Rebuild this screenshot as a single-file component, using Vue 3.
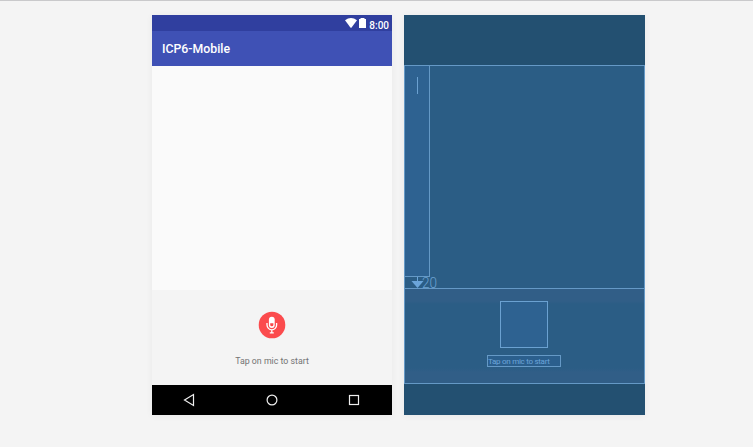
<script setup>
const title = 'ICP6-Mobile'
const hint = 'Tap on mic to start'
</script>

<template>
  <main class="editor">
    <section class="device preview">
      <div class="status">
        <svg class="wifi" width="12" height="10" viewBox="0 0 12 10"><path d="M0 2.2Q6-2 12 2.2L6.6 9.4Q6 10 5.4 9.4Z" fill="#fff" /></svg>
        <svg class="battery" width="7" height="10" viewBox="0 0 7 10"><path d="M0 1H1.5V0H5.5V1H7V10H0Z" fill="#fff" /></svg>
        <span class="clock">8:00</span>
      </div>
      <header class="appbar">{{ title }}</header>
      <div class="content"></div>
      <div class="panel">
        <svg class="mic" width="28" height="28" viewBox="0 0 28 28">
          <circle cx="14" cy="14" r="13.3" fill="#fb4b4d" />
          <rect x="10.9" y="5.7" width="5.8" height="11.2" rx="2.9" fill="#fff" />
          <path d="M12.2 12.2h3.2v1.5a1.6 1.6 0 0 1-3.2 0Z" fill="#f9484b" />
          <path d="M9 12v2a4.8 4.8 0 0 0 9.6 0V12M13.8 18.8V21.6M11.8 21.8h4" fill="none" stroke="#fff" stroke-width="1.3" />
        </svg>
        <p class="hint">{{ hint }}</p>
      </div>
      <nav class="navbar">
        <svg width="12" height="14" viewBox="0 0 12 14"><path d="M10.5 1.5V12.5L1.5 7Z" /></svg>
        <svg width="12" height="12" viewBox="0 0 12 12"><circle cx="6" cy="6" r="4.9" /></svg>
        <svg width="12" height="12" viewBox="0 0 12 12"><rect x="1.5" y="1.5" width="9" height="9" /></svg>
      </nav>
    </section>

    <section class="device blueprint">
      <div class="bp-top"></div>
      <div class="bp-content">
        <div class="bp-view"><span class="bp-cursor"></span></div>
        <div class="bp-margin">
          <svg width="12" height="11" viewBox="0 0 12 11"><path d="M6.5 0V5" stroke="#6ba5da" /><path d="M.5 4H12.5L6.5 11Z" fill="#6ba5da" /></svg>
          <svg class="bp-number" width="16" height="12" viewBox="0 0 16 12"><text x="0" y="11" textLength="15" lengthAdjust="spacingAndGlyphs">20</text></svg>
        </div>
      </div>
      <div class="bp-panel">
        <div class="bp-button"></div>
        <div class="bp-label">{{ hint }}</div>
      </div>
      <div class="bp-bottom"></div>
    </section>
  </main>
</template>

<style>
body {
  background: #f4f4f4;
}
</style>

<style scoped>
.editor {
  box-sizing: border-box;
  width: 753px;
  height: 447px;
  border-top: 1px solid #c9c9cb;
  padding: 14px 0 0 152px;
  display: flex;
  align-items: flex-start;
  gap: 12px;
  background: #f4f4f4;
  overflow: hidden;
  font-family: Roboto, sans-serif;
}
.device {
  width: 240px;
  height: 400px;
  display: flex;
  flex-direction: column;
  box-shadow: 0 1px 7px rgba(0, 0, 0, 0.05);
}
.status {
  height: 16px;
  box-sizing: border-box;
  padding: 3px 3px 0 0;
  display: flex;
  justify-content: flex-end;
  align-items: flex-start;
  background: #303f9f;
  color: #fff;
  font-size: 10px;
  line-height: 14px;
}
.clock {
  font-weight: 500;
  line-height: 15px;
}
.wifi {
  margin-right: 2px;
}
.battery {
  margin-right: 3px;
}
.appbar {
  height: 35px;
  box-sizing: border-box;
  padding-left: 10px;
  background: #3f51b5;
  color: #fff;
  font-size: 12.3px;
  font-weight: 500;
  line-height: 36px;
}
.content {
  height: 224px;
  background: #fafafa;
}
.panel {
  height: 95px;
  box-sizing: border-box;
  padding-top: 21px;
  display: flex;
  flex-direction: column;
  align-items: center;
  background: #f4f4f4;
}
.hint {
  margin: 16px 0 0;
  font-size: 8.8px;
  line-height: 13px;
  color: #737373;
}
.navbar {
  height: 30px;
  display: grid;
  grid-template-columns: 74px 92px 72px;
  place-items: center;
  background: #000;
}
.navbar svg {
  fill: none;
  stroke: #eee;
  stroke-width: 1.2;
}
.blueprint {
  width: 241px;
  background: #235071;
}
.bp-top {
  height: 50px;
}
.bp-content {
  height: 223px;
  box-sizing: border-box;
  border: 1px solid #6599c6;
  border-bottom: 0;
  background: #2b5d85;
}
.bp-view {
  width: 24px;
  height: 210px;
  border-right: 1px solid #6599c6;
  border-bottom: 1px solid #6599c6;
  background: #2e6291;
  display: flex;
  justify-content: center;
}
.bp-cursor {
  width: 1px;
  height: 17px;
  margin-top: 11px;
  background: #6ba1d1;
}
.bp-margin {
  display: flex;
  padding-left: 6px;
  height: 11px;
}
.bp-margin svg {
  overflow: visible;
}
.bp-number {
  margin-left: -1px;
  font-size: 14px;
  font-weight: 300;
  fill: #6ba1d1;
}
.bp-panel {
  height: 96px;
  box-sizing: border-box;
  border: 1px solid #6599c6;
  padding: 12px 1px 0 0;
  display: flex;
  flex-direction: column;
  align-items: center;
  background: linear-gradient(#315e87 0 12px, #2b5d85 15px 79px, #315e87 83px);
}
.bp-button {
  box-sizing: border-box;
  width: 48px;
  height: 47px;
  border: 1px solid #6ba1d1;
  background: #2e6291;
}
.bp-label {
  box-sizing: border-box;
  width: 74px;
  height: 12px;
  margin-top: 7px;
  border: 1px solid #6599c6;
  background: #2b5f8d;
  color: #6ba5da;
  font-size: 8px;
  line-height: 11px;
  letter-spacing: -0.28px;
  white-space: nowrap;
}
.bp-bottom {
  height: 31px;
}
</style>
